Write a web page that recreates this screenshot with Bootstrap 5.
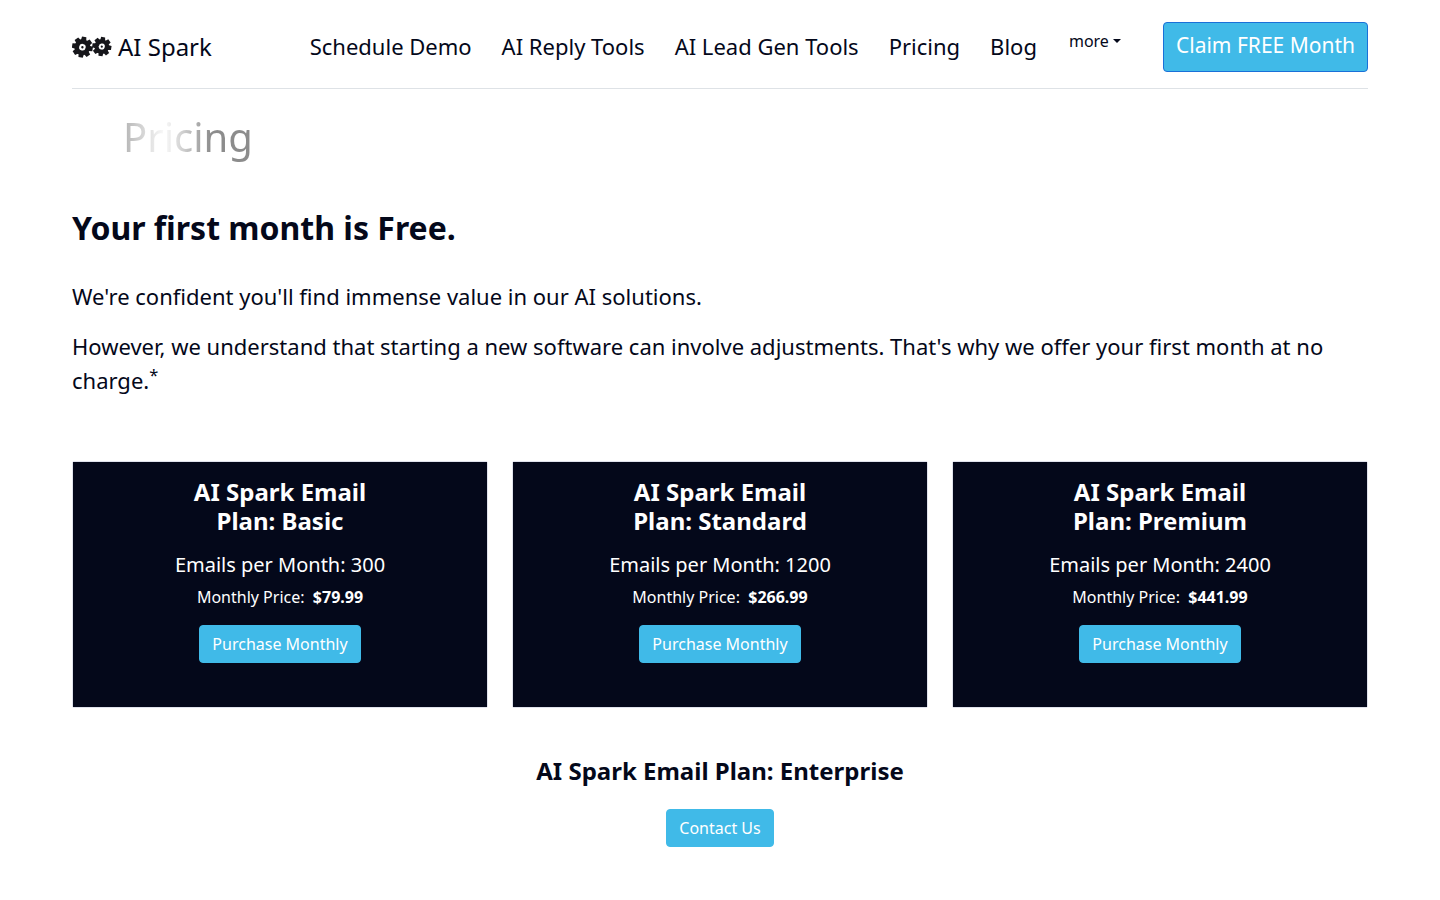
<!DOCTYPE html>
<html lang="en">
<head>
<meta charset="utf-8">
<meta name="viewport" content="width=device-width, initial-scale=1">
<title>AI Spark - Pricing</title>
<link href="https://cdn.jsdelivr.net/npm/bootstrap@5.3.0/dist/css/bootstrap.min.css" rel="stylesheet">
<style>
  :root { --ink: #04081a; --sky: #40bae8; }
  body { font-family: "Noto Sans", sans-serif; color: var(--ink); }
  .brand-link { gap: 6px; padding-top: 7px; }
  .brand-name { font-size: 24px; line-height: 36px; }
  .site-header { padding-top: 22px; }
  .header-end { gap: 40px; }
  .main-nav { gap: 30px; font-size: 22px; line-height: 32px; }
  .main-nav .btn { --bs-btn-color: var(--ink); --bs-btn-padding-x: 2px; }
  .btn-sky {
    --bs-btn-color: #fff; --bs-btn-bg: var(--sky); --bs-btn-border-color: var(--sky);
    --bs-btn-hover-color: #fff; --bs-btn-hover-bg: #2aa9da; --bs-btn-hover-border-color: #2aa9da;
    --bs-btn-border-radius: 4px;
  }
  .btn-claim {
    --bs-btn-border-color: #1a70d8; --bs-btn-font-size: 21px; --bs-btn-line-height: 32px;
    padding-bottom: 10px;
  }
  .page-title { font-size: 40px; line-height: 48px; padding: 24px 0 0 51px; font-weight: 400; }
  .page-title span {
    background: linear-gradient(90deg, #b4b4b4 0, #fafafa 32%, #8c8c8c 68%, #8c8c8c 100%);
    -webkit-background-clip: text; background-clip: text; color: transparent;
  }
  .headline { font-size: 32px; line-height: 38px; margin: 48px 0 32px; }
  .intro { font-size: 22px; line-height: 34px; }
  .plan { --bs-card-bg: #fff; --bs-card-border-radius: 2px; --bs-card-border-color: #e0e2ec; }
  .plan .card-body { background: var(--ink); color: #fff; padding: 15px 16px 44px; }
  .plan-name { font-size: 24px; line-height: 29px; }
  .plan .plan-name { margin-bottom: 18px; }
</style>
</head>
<body>
<div class="container">
  <header class="site-header d-flex justify-content-between align-items-start border-bottom pb-3">
    <a class="brand-link d-flex align-items-center text-decoration-none text-reset" href="#">
      <svg width="40" height="24" viewBox="0 0 40 24" class="flex-shrink-0" aria-hidden="true">
        <defs>
          <g id="gear" fill="#17171b">
            <circle r="7.9"/>
            <path id="tooth" d="M-2.7-6.5-2.2-10.4H2.2L2.7-6.5V-5H-2.7Z"/>
            <use href="#tooth" transform="rotate(45)"/>
            <use href="#tooth" transform="rotate(90)"/>
            <use href="#tooth" transform="rotate(135)"/>
            <use href="#tooth" transform="rotate(180)"/>
            <use href="#tooth" transform="rotate(225)"/>
            <use href="#tooth" transform="rotate(270)"/>
            <use href="#tooth" transform="rotate(315)"/>
            <circle r="3.3" fill="#fff"/>
            <circle r="1.2"/>
          </g>
        </defs>
        <use href="#gear" transform="translate(10.4 12.2) rotate(10)"/>
        <use href="#gear" transform="translate(29.8 11.6) rotate(8) scale(.92)"/>
      </svg>
      <span class="brand-name">AI Spark</span>
    </a>
    <div class="header-end d-flex align-items-start">
      <nav class="main-nav d-flex align-items-start">
        <a class="text-reset text-decoration-none pt-2" href="#">Schedule Demo</a>
        <a class="text-reset text-decoration-none pt-2" href="#">AI Reply Tools</a>
        <a class="text-reset text-decoration-none pt-2" href="#">AI Lead Gen Tools</a>
        <a class="text-reset text-decoration-none pt-2" href="#">Pricing</a>
        <a class="text-reset text-decoration-none pt-2" href="#">Blog</a>
        <div class="dropdown">
          <button class="btn dropdown-toggle border-0" type="button" data-bs-toggle="dropdown" aria-expanded="false">more</button>
          <ul class="dropdown-menu">
            <li><a class="dropdown-item" href="#">About</a></li>
          </ul>
        </div>
      </nav>
      <button class="btn btn-sky btn-claim" type="button">Claim FREE Month</button>
    </div>
  </header>

  <main>
    <h1 class="page-title mb-0"><span>Pricing</span></h1>
    <h2 class="headline fw-bold">Your first month is Free.</h2>
    <div class="intro">
      <p>We're confident you'll find immense value in our AI solutions.</p>
      <p>However, we understand that starting a new software can involve adjustments. That's why we offer your first month at no charge.<sup>*</sup></p>
    </div>

    <div class="row mt-5 pt-3 text-center">
      <div class="col-md-4">
        <div class="card plan"><div class="card-body">
          <h3 class="plan-name fw-bold">AI Spark Email<br>Plan: Basic</h3>
          <h4 class="fs-5 fw-normal">Emails per Month: 300</h4>
          <p>Monthly Price: &nbsp;<strong>$79.99</strong></p>
          <button class="btn btn-sky" type="button">Purchase Monthly</button>
        </div></div>
      </div>
      <div class="col-md-4">
        <div class="card plan"><div class="card-body">
          <h3 class="plan-name fw-bold">AI Spark Email<br>Plan: Standard</h3>
          <h4 class="fs-5 fw-normal">Emails per Month: 1200</h4>
          <p>Monthly Price: &nbsp;<strong>$266.99</strong></p>
          <button class="btn btn-sky" type="button">Purchase Monthly</button>
        </div></div>
      </div>
      <div class="col-md-4">
        <div class="card plan"><div class="card-body">
          <h3 class="plan-name fw-bold">AI Spark Email<br>Plan: Premium</h3>
          <h4 class="fs-5 fw-normal">Emails per Month: 2400</h4>
          <p>Monthly Price: &nbsp;<strong>$441.99</strong></p>
          <button class="btn btn-sky" type="button">Purchase Monthly</button>
        </div></div>
      </div>
    </div>

    <section class="text-center mt-5">
      <h3 class="plan-name fw-bold mb-4">AI Spark Email Plan: Enterprise</h3>
      <button class="btn btn-sky" type="button">Contact Us</button>
    </section>
  </main>
</div>
<script src="https://cdn.jsdelivr.net/npm/bootstrap@5.3.0/dist/js/bootstrap.bundle.min.js"></script>
</body>
</html>
